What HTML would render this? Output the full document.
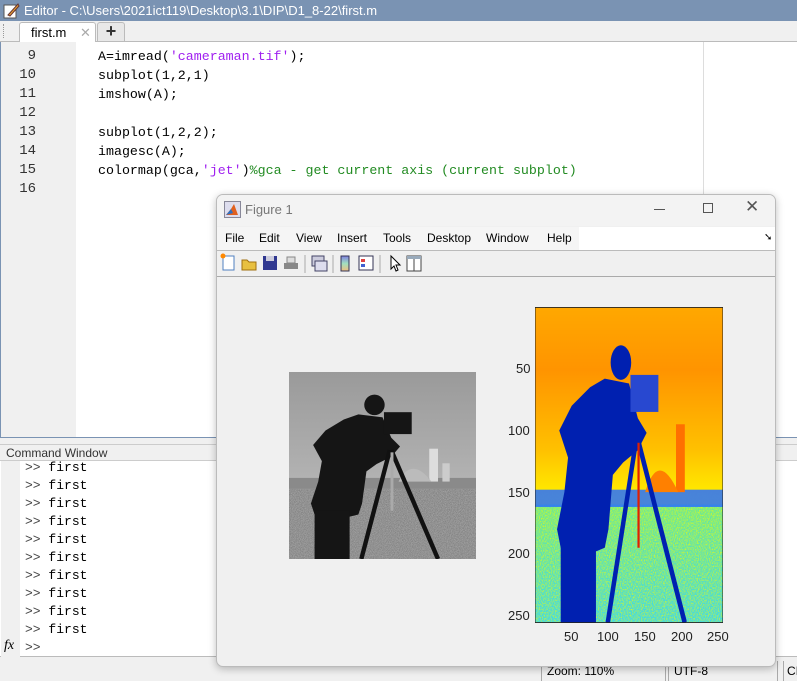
<!DOCTYPE html>
<html><head><meta charset="utf-8"><style>
*{margin:0;padding:0;box-sizing:border-box}
body{width:797px;height:681px;overflow:hidden;background:#f0f0f0;position:relative;font-family:"Liberation Sans",sans-serif;font-size:12px}
.abs{position:absolute}
.mono{font-family:"Liberation Mono",monospace}
.code div{height:19px;line-height:19px;font-size:13.3px;white-space:pre}
.num div{height:19px;line-height:19px;font-size:14px;text-align:right}
.cmd div{height:18px;line-height:18px;font-size:13px;white-space:pre;color:#000}
</style></head><body>
<div class="abs" style="left:0;top:0;width:797px;height:21px;background:#7a93b3;color:#fff;font-size:13px;line-height:21px;padding-left:24px">Editor - C:\Users\2021ict119\Desktop\3.1\DIP\D1_8-22\first.m</div>
<svg class="abs" style="left:3px;top:2px" width="17" height="17"><rect x="1" y="3" width="12" height="13" fill="#fff" stroke="#555"/><path d="M5 13 L15 2 L16 4 L7 14 Z" fill="#e8a030" stroke="#633"/></svg>
<div class="abs" style="left:0;top:21px;width:797px;height:21px;background:#f0f0f0;border-bottom:1px solid #bbb"></div>
<div class="abs" style="left:3px;top:24px;width:2px;height:14px;border-left:1px dotted #999"></div>
<div class="abs" style="left:19px;top:22px;width:77px;height:20px;background:#fff;border:1px solid #bbb;border-bottom:none;border-radius:3px 3px 0 0;font-size:13px;line-height:19px;padding-left:11px">first.m<span style="position:absolute;left:60px;color:#aaa">✕</span></div>
<div class="abs" style="left:97px;top:22px;width:28px;height:19px;background:#e8e8e8;border:1px solid #bbb;border-bottom:none;border-radius:3px 3px 0 0;font-size:18px;font-weight:bold;line-height:17px;text-align:center;color:#333">+</div>
<div class="abs" style="left:0;top:42px;width:797px;height:395px;background:#fff;border-left:1px solid #7a93b3"></div>
<div class="abs" style="left:1px;top:42px;width:75px;height:395px;background:#f0f0f0"></div>
<div class="abs" style="left:703px;top:42px;width:1px;height:395px;background:#ddd"></div>
<div class="abs num mono" style="left:0;top:47px;width:36px;color:#333">
<div>9</div><div>10</div><div>11</div><div>12</div><div>13</div><div>14</div><div>15</div><div>16</div></div>
<div class="abs code mono" style="left:98px;top:47px">
<div>A=imread(<span style="color:#a020f0">'cameraman.tif'</span>);</div><div>subplot(1,2,1)</div><div>imshow(A);</div><div> </div><div>subplot(1,2,2);</div><div>imagesc(A);</div><div>colormap(gca,<span style="color:#a020f0">'jet'</span>)<span style="color:#228b22">%gca - get current axis (current subplot)</span></div><div> </div></div>
<div class="abs" style="left:0;top:437px;width:797px;height:7px;background:#f0f0f0;border-top:1px solid #7a93b3"></div>
<div class="abs" style="left:0;top:444px;width:797px;height:17px;background:#f0f0f0;border-top:1px solid #ccc;border-bottom:1px solid #ccc;font-size:12px;line-height:16px;padding-left:6px;color:#333">Command Window</div>
<div class="abs" style="left:0;top:461px;width:797px;height:196px;background:#fff;border-bottom:1px solid #bbb"></div>
<div class="abs" style="left:1px;top:461px;width:19px;height:196px;background:#f0f0f0"></div>
<div class="abs cmd mono" style="left:25px;top:459px">
<div><span style="color:#444">&gt;&gt;</span> first</div><div><span style="color:#444">&gt;&gt;</span> first</div><div><span style="color:#444">&gt;&gt;</span> first</div><div><span style="color:#444">&gt;&gt;</span> first</div><div><span style="color:#444">&gt;&gt;</span> first</div><div><span style="color:#444">&gt;&gt;</span> first</div><div><span style="color:#444">&gt;&gt;</span> first</div><div><span style="color:#444">&gt;&gt;</span> first</div><div><span style="color:#444">&gt;&gt;</span> first</div><div><span style="color:#444">&gt;&gt;</span> first</div><div><span style="color:#444">&gt;&gt;</span></div></div>
<div class="abs" style="left:4px;top:638px;font-family:'Liberation Serif',serif;font-style:italic;font-size:14px">fx</div>
<div class="abs" style="left:0;top:658px;width:797px;height:23px;background:#f0f0f0"></div>
<div class="abs" style="left:541px;top:661px;width:125px;height:20px;border-left:1px solid #aaa;border-right:1px solid #aaa;font-size:12px;padding:3px 0 0 5px">Zoom: 110%</div>
<div class="abs" style="left:668px;top:661px;width:110px;height:20px;border-left:1px solid #aaa;border-right:1px solid #aaa;font-size:12px;padding:3px 0 0 5px">UTF-8</div>
<div class="abs" style="left:783px;top:661px;width:14px;height:20px;border-left:1px solid #aaa;font-size:12px;padding:3px 0 0 3px">CI</div>
<div class="abs" style="left:216px;top:194px;width:560px;height:473px;background:#f0f0f0;border:1px solid #bbb;border-radius:7px;box-shadow:0 2px 8px rgba(0,0,0,.25);overflow:hidden">
 <div class="abs" style="left:0;top:0;width:560px;height:31px;background:#f3f3f3"></div>
 <svg class="abs" style="left:7px;top:6px" width="17" height="17"><rect x="0.5" y="0.5" width="16" height="16" fill="#dde" stroke="#889"/><path d="M2 14 L7 8 L10 3 L14 14 Z" fill="#e06020"/><path d="M2 14 L7 8 L9 12 Z" fill="#3070c0"/></svg>
 <div class="abs" style="left:28px;top:7px;font-size:13px;color:#777">Figure 1</div>
 <div class="abs" style="left:437px;top:14px;width:11px;height:1px;background:#555"></div>
 <div class="abs" style="left:486px;top:8px;width:10px;height:10px;border:1px solid #555"></div>
 <div class="abs" style="left:528px;top:2px;font-size:17px;color:#555">✕</div>
 <div class="abs" style="left:0;top:32px;width:560px;height:23px;background:#fff"></div>
 <div class="abs" style="left:0;top:32px;width:362px;height:23px;background:#f5f5f5"></div>
 <div class="abs" style="left:8px;top:36px">File</div>
 <div class="abs" style="left:42px;top:36px">Edit</div>
 <div class="abs" style="left:79px;top:36px">View</div>
 <div class="abs" style="left:120px;top:36px">Insert</div>
 <div class="abs" style="left:166px;top:36px">Tools</div>
 <div class="abs" style="left:210px;top:36px">Desktop</div>
 <div class="abs" style="left:269px;top:36px">Window</div>
 <div class="abs" style="left:330px;top:36px">Help</div>
 <div class="abs" style="left:547px;top:37px;font-size:10px">➘</div>
 <div class="abs" style="left:0;top:55px;width:560px;height:1px;background:#bbb"></div>
 <div class="abs" style="left:0;top:56px;width:560px;height:26px;background:#f0f0f0;border-bottom:1px solid #aaa"></div>
 <svg class="abs" style="left:0;top:56px" width="240" height="26">
  <rect x="6" y="5" width="11" height="14" fill="#fff" stroke="#5080c0"/><circle cx="6" cy="5" r="2.5" fill="#f80"/>
  <path d="M25 9 h5 l2 2 h7 v8 h-14 z" fill="#e8c040" stroke="#a07010"/>
  <rect x="46" y="5" width="14" height="14" fill="#303890"/><rect x="49" y="5" width="8" height="5" fill="#ccd"/>
  <path d="M67 12 h14 v6 h-14 z" fill="#888"/><rect x="70" y="6" width="8" height="6" fill="#ddd" stroke="#888"/>
  <line x1="88" y1="4" x2="88" y2="22" stroke="#aaa"/>
  <rect x="95" y="5" width="12" height="10" fill="#ccd" stroke="#446"/><rect x="98" y="10" width="12" height="10" fill="#dde" stroke="#446"/>
  <line x1="116" y1="4" x2="116" y2="22" stroke="#aaa"/>
  <defs><linearGradient id="cb" x1="0" y1="0" x2="0" y2="1"><stop offset="0" stop-color="#8080e0"/><stop offset=".5" stop-color="#a0e0c0"/><stop offset="1" stop-color="#f0c080"/></linearGradient></defs>
  <rect x="124" y="5" width="8" height="15" fill="url(#cb)" stroke="#335"/>
  <rect x="142" y="5" width="14" height="14" fill="#fff" stroke="#335"/><rect x="144" y="8" width="4" height="3" fill="#e04040"/><rect x="144" y="13" width="4" height="3" fill="#4060d0"/>
  <line x1="163" y1="4" x2="163" y2="22" stroke="#aaa"/>
  <path d="M174 5 v13 l3-3 l2 5 l2-1 l-2-5 h4 z" fill="#fff" stroke="#000"/>
  <rect x="190" y="5" width="14" height="15" fill="#fff" stroke="#444"/><rect x="190" y="5" width="14" height="3" fill="#9ab"/><line x1="197" y1="8" x2="197" y2="20" stroke="#444"/>
 </svg>
</div>
<svg class="abs" style="left:289px;top:372px" width="187" height="187" viewBox="0 0 256 256" preserveAspectRatio="none">
 <defs><linearGradient id="sky" x1="0" y1="0" x2="0" y2="1"><stop offset="0" stop-color="#9a9a9a"/><stop offset="1" stop-color="#c4c4c4"/></linearGradient>
 <filter id="n"><feTurbulence type="fractalNoise" baseFrequency="0.9" numOctaves="1"/><feColorMatrix values="0 0 0 0 .45  0 0 0 0 .45  0 0 0 0 .45  0 0 0 -1.2 1.1"/></filter></defs>
 <rect width="256" height="256" fill="url(#sky)"/>
 <rect y="160" width="256" height="96" fill="#707070"/>
 <rect y="160" width="256" height="96" filter="url(#n)"/>
 <rect y="145" width="256" height="15" fill="#8a8a8a"/>
 <rect x="192" y="105" width="12" height="45" fill="#ddd"/><rect x="210" y="125" width="10" height="25" fill="#ccc"/>
 <path d="M150 150 Q168 115 195 150 Z" fill="#bbb"/>
 <g fill="#151515">
  <circle cx="117" cy="45" r="14"/>
  <path d="M95 58 L128 62 L140 90 L152 102 L140 116 L120 126 L106 136 L100 180 L95 195 L75 200 L35 195 L30 180 L40 150 L45 122 L33 100 L50 80 L75 65 Z"/>
  <rect x="35" y="190" width="48" height="66"/>
  <rect x="130" y="55" width="38" height="30"/>
 </g>
 <g stroke="#111" stroke-width="6"><line x1="138" y1="107" x2="99" y2="256"/><line x1="140" y1="107" x2="204" y2="256"/></g>
 <line x1="141" y1="110" x2="141" y2="190" stroke="#aaa" stroke-width="4"/>
</svg>
<svg class="abs" style="left:535px;top:307px" width="188" height="316" viewBox="0 0 256 256" preserveAspectRatio="none">
 <defs><linearGradient id="jsky" x1="0" y1="0" x2="0" y2="1"><stop offset="0" stop-color="#ffa800"/><stop offset=".2" stop-color="#ff9400"/><stop offset=".45" stop-color="#ffc000"/><stop offset=".6" stop-color="#ffee00"/></linearGradient>
 <linearGradient id="jg" x1="0" y1="0" x2="0" y2="1"><stop offset="0" stop-color="#70e890"/><stop offset="1" stop-color="#40d8e8"/></linearGradient>
 <filter id="n2"><feTurbulence type="fractalNoise" baseFrequency="0.8" numOctaves="1"/><feColorMatrix values="0 0 0 0 .9  0 0 0 0 1  0 0 0 0 0  0 0 0 -2 1.2"/></filter></defs>
 <rect width="256" height="256" fill="url(#jsky)"/>
 <rect y="160" width="256" height="96" fill="url(#jg)"/>
 <rect y="160" width="256" height="96" filter="url(#n2)"/>
 <rect y="148" width="256" height="14" fill="#2870ff" opacity=".85"/>
 <rect x="192" y="95" width="12" height="55" fill="#ff7000"/>
 <path d="M150 150 Q168 115 195 150 Z" fill="#ff8000"/>
 <g fill="#0020b0">
  <circle cx="117" cy="45" r="14"/>
  <path d="M95 58 L128 62 L140 90 L152 102 L140 116 L120 126 L106 136 L100 180 L95 195 L75 200 L35 195 L30 180 L40 150 L45 122 L33 100 L50 80 L75 65 Z"/>
  <rect x="35" y="190" width="48" height="66"/>
  <rect x="130" y="55" width="38" height="30" fill="#2848d0"/>
 </g>
 <g stroke="#0020b0" stroke-width="6"><line x1="138" y1="107" x2="99" y2="256"/><line x1="140" y1="107" x2="204" y2="256"/></g>
 <line x1="141" y1="110" x2="141" y2="195" stroke="#e02000" stroke-width="3"/>
 <rect x="0.3" y="0.3" width="255.4" height="255.4" fill="none" stroke="#222" stroke-width="0.8"/>
</svg>
<div class="abs" style="left:500px;top:361px;font-size:13px;color:#222;line-height:16px">
 <div class="abs" style="left:16px;top:0">50</div><div class="abs" style="left:8px;top:62px">100</div><div class="abs" style="left:8px;top:124px">150</div><div class="abs" style="left:8px;top:185px">200</div><div class="abs" style="left:8px;top:247px">250</div>
</div>
<div class="abs" style="top:629px;left:0;font-size:13px;color:#222">
 <div class="abs" style="left:564px">50</div><div class="abs" style="left:597px">100</div><div class="abs" style="left:634px">150</div><div class="abs" style="left:671px">200</div><div class="abs" style="left:707px">250</div>
</div>
</body></html>
